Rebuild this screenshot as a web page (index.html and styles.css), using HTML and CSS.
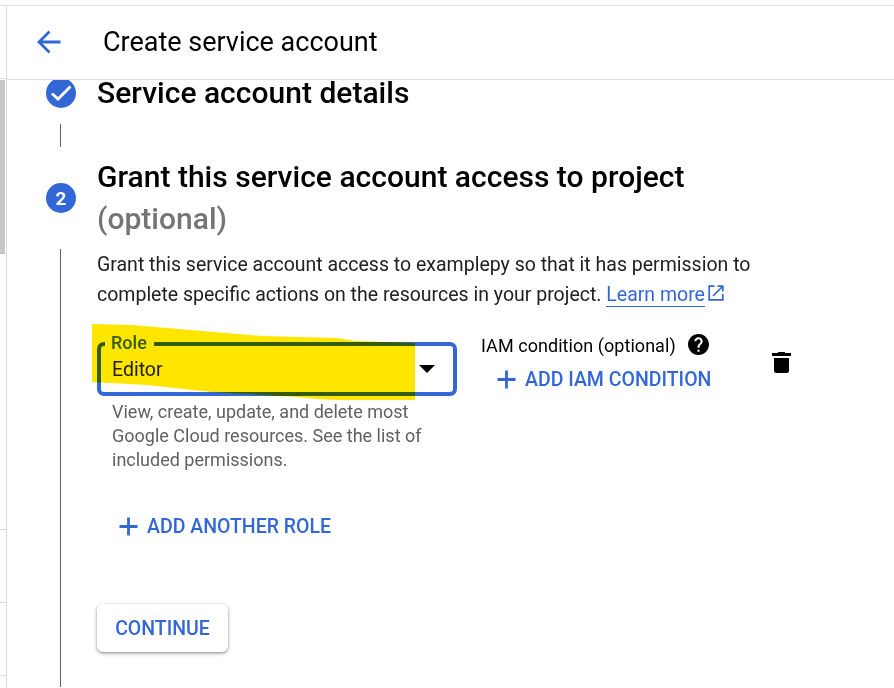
FILE: index.html
```html
<!DOCTYPE html>
<html lang="en">
<head>
<meta charset="utf-8">
<title>Create service account</title>
<link rel="stylesheet" href="styles.css">
</head>
<body>
<div class="app">
  <aside class="sidebar">
    <div class="sidebar-head"></div>
    <div class="sidebar-thumb"></div>
    <div class="sidebar-space"></div>
    <div class="sidebar-item"></div>
    <div class="sidebar-item"></div>
    <div class="sidebar-rest"></div>
  </aside>
  <div class="page">
    <header class="header">
      <svg class="back" width="24" height="24" viewBox="0 0 24 24"><path d="M23.500 12H2M12.500 1.500L2 12L12.500 22.500" fill="none" stroke="#3367d6" stroke-width="2.800"/></svg>
      <h1 class="title">Create service account</h1>
    </header>
    <main class="steps">
      <div class="rail">
        <svg width="30" height="28" viewBox="0 2 30 28"><circle cx="15" cy="15" r="15" fill="#3367d6"/><path d="M6 15.500L12 21L24.500 8.500" fill="none" stroke="#fff" stroke-width="2.800"/></svg>
        <div class="line line-short"></div>
        <div class="badge">2</div>
        <div class="line line-long"></div>
      </div>
      <div class="content">
        <h2 class="heading heading-first">Service account details</h2>
        <h2 class="heading">Grant this service account access to project<br><span class="muted">(optional)</span></h2>
        <p class="intro">Grant this service account access to examplepy so that it has permission to<br>complete specific actions on the resources in your project. <a class="link">Learn more</a><svg class="external" width="16" height="16" viewBox="0 0 16 16"><path d="M6.500 1.200H1.200V14.800H14.800V9M9.500 1.200H14.800V6.500M14.500 1.500L5 11" fill="none" stroke="#3367d6" stroke-width="1.700"/></svg></p>
        <div class="binding">
          <div class="role">
            <div class="select">
              <span class="label">Role</span>
              <span class="value">Editor</span>
              <svg class="caret" width="16" height="8" viewBox="0 0 16 8"><path d="M0 0H16L8 8Z"/></svg>
              <svg class="marker" width="323" height="76" viewBox="0 0 323 76"><path d="M0 0L40 1L110 7L170 12L245 14L263 17L323 19V76L245 76L225 75L205 73L120 68L55 61L0 58Z" fill="#ffe600"/></svg>
            </div>
            <p class="hint">View, create, update, and delete most<br>Google Cloud resources. See the list of<br>included permissions.</p>
          </div>
          <div class="condition">
            <div class="condition-label"><span>IAM condition (optional)</span>
              <svg width="21" height="21" viewBox="2 2 20 20"><path d="M12 2C6.480 2 2 6.480 2 12s4.480 10 10 10 10-4.480 10-10S17.520 2 12 2zm1 17h-2v-2h2v2zm2.070-7.750l-.9.920C13.450 12.900 13 13.500 13 15h-2v-.5c0-1.100.45-2.100 1.170-2.830l1.240-1.260c.37-.36.590-.86.590-1.410 0-1.100-.9-2-2-2s-2 .9-2 2H8c0-2.210 1.790-4 4-4s4 1.790 4 4c0 .88-.36 1.680-.93 2.250z"/></svg>
            </div>
            <div class="action"><svg width="19" height="19" viewBox="0 0 19 19"><path d="M9.500 .5V18.500M.5 9.500H18.500" stroke="#3367d6" stroke-width="2.800"/></svg><span>ADD IAM CONDITION</span></div>
          </div>
          <svg class="trash" width="19" height="21" viewBox="0 0 19 21"><path d="M2 6H17V18.500Q17 21 14.500 21H4.500Q2 21 2 18.500ZM0 1H5.500L6.500 0H12.500L13.500 1H19V4H0Z"/></svg>
        </div>
        <div class="action action-role"><svg width="19" height="19" viewBox="0 0 19 19"><path d="M9.500 .5V18.500M.5 9.500H18.500" stroke="#3367d6" stroke-width="2.800"/></svg><span>ADD ANOTHER ROLE</span></div>
        <button class="continue">CONTINUE</button>
      </div>
    </main>
  </div>
</div>
</body>
</html>
```
FILE: styles.css
```css
* { box-sizing: border-box; }
body { margin: 0; background: #fff; color: #000; font-family: Roboto, sans-serif; }
h1, h2, p { margin: 0; font-weight: 400; }
svg { display: block; flex: none; }
.app { display: flex; height: 688px; padding-top: 5px; overflow: hidden; }
.sidebar { width: 6px; flex: none; border-top: 1px solid #ddd; display: flex; flex-direction: column; }
.sidebar-head { height: 73px; border-bottom: 1px solid #ddd; }
.sidebar-thumb { width: 5px; height: 174px; margin-top: 1px; background: #c8c8c8; border-bottom: 1px solid #b8b8b8; }
.sidebar-space { height: 276px; border-bottom: 1px solid #ddd; }
.sidebar-item { height: 73px; border-bottom: 1px solid #ddd; }
.sidebar-rest { flex: 1; }
.page { flex: 1; border-left: 1px solid #ddd; border-top: 1px solid #ddd; display: flex; flex-direction: column; }
.header { height: 74px; flex: none; border-bottom: 1px solid #ddd; display: flex; align-items: center; padding: 0 0 1px 30px; }
.title { margin-left: 42px; font-size: 27px; line-height: 40px; letter-spacing: -.01px; white-space: nowrap; }
.steps { flex: 1; min-height: 0; display: flex; gap: 21px; padding-left: 39px; }
.rail { width: 30px; flex: none; display: flex; flex-direction: column; align-items: center; }
.badge { width: 30px; height: 30px; flex: none; border-radius: 50%; background: #3367d6; color: #fff; font-size: 19px; font-weight: 700; line-height: 31px; text-align: center; margin-top: 36px; }
.line { width: 1px; flex: none; margin-right: 1px; background: #616161; }
.line-short { height: 23px; margin-top: 16px; }
.line-long { height: 438px; margin-top: 36px; }
.content { flex: 1; white-space: nowrap; }
.heading { font-size: 30px; font-weight: 500; line-height: 42px; letter-spacing: .015px; margin-top: 42px; }
.heading-first { margin-top: -8px; }
.muted { color: #757575; }
.intro { margin-top: 10px; font-size: 19.5px; line-height: 30px; color: #212121; }
.link { color: #3367d6; border-bottom: 1px solid #3367d6; }
.external { display: inline-block; margin-left: 3px; }
.binding { display: flex; align-items: flex-start; margin-top: 32px; }
.role { width: 360px; }
.select { position: relative; height: 54px; border: 4px solid #3367d6; border-radius: 7px; display: flex; align-items: center; justify-content: space-between; padding: 0 18px 0 11px; }
.label { position: absolute; left: 4px; top: -13px; width: 49px; padding-left: 6px; background: #fff; color: #3367d6; font-size: 18px; font-weight: 500; line-height: 20px; }
.value { padding-top: 2px; font-size: 19.5px; line-height: 24px; color: #212121; }
.marker { position: absolute; left: -9px; top: -22px; mix-blend-mode: multiply; }
.hint { padding-left: 15px; margin-top: 4px; color: #616161; font-size: 18px; line-height: 24px; }
.condition { width: 291px; padding-left: 24px; }
.condition-label { display: flex; align-items: center; gap: 12px; height: 21px; margin-top: -8px; font-size: 18px; line-height: 19px; letter-spacing: .05px; }
.condition-label span { padding-top: 2px; }
.action { display: flex; align-items: center; gap: 9px; height: 24px; color: #3367d6; font-size: 19.5px; font-weight: 500; line-height: 24px; margin: 12px 0 0 16px; }
.action span { padding-top: 2px; }
.trash { margin: 10px 0 0 24px; }
.action-role { margin: 42px 0 0 22px; }
.continue { display: block; width: 131px; height: 48px; margin-top: 66px; padding: 0; border: 0; border-radius: 6px; background: #fff; color: #3367d6; font: 500 19.5px Roboto, sans-serif; box-shadow: 0 1px 3px rgba(0,0,0,.35), 0 2px 4px rgba(0,0,0,.15); }
```
